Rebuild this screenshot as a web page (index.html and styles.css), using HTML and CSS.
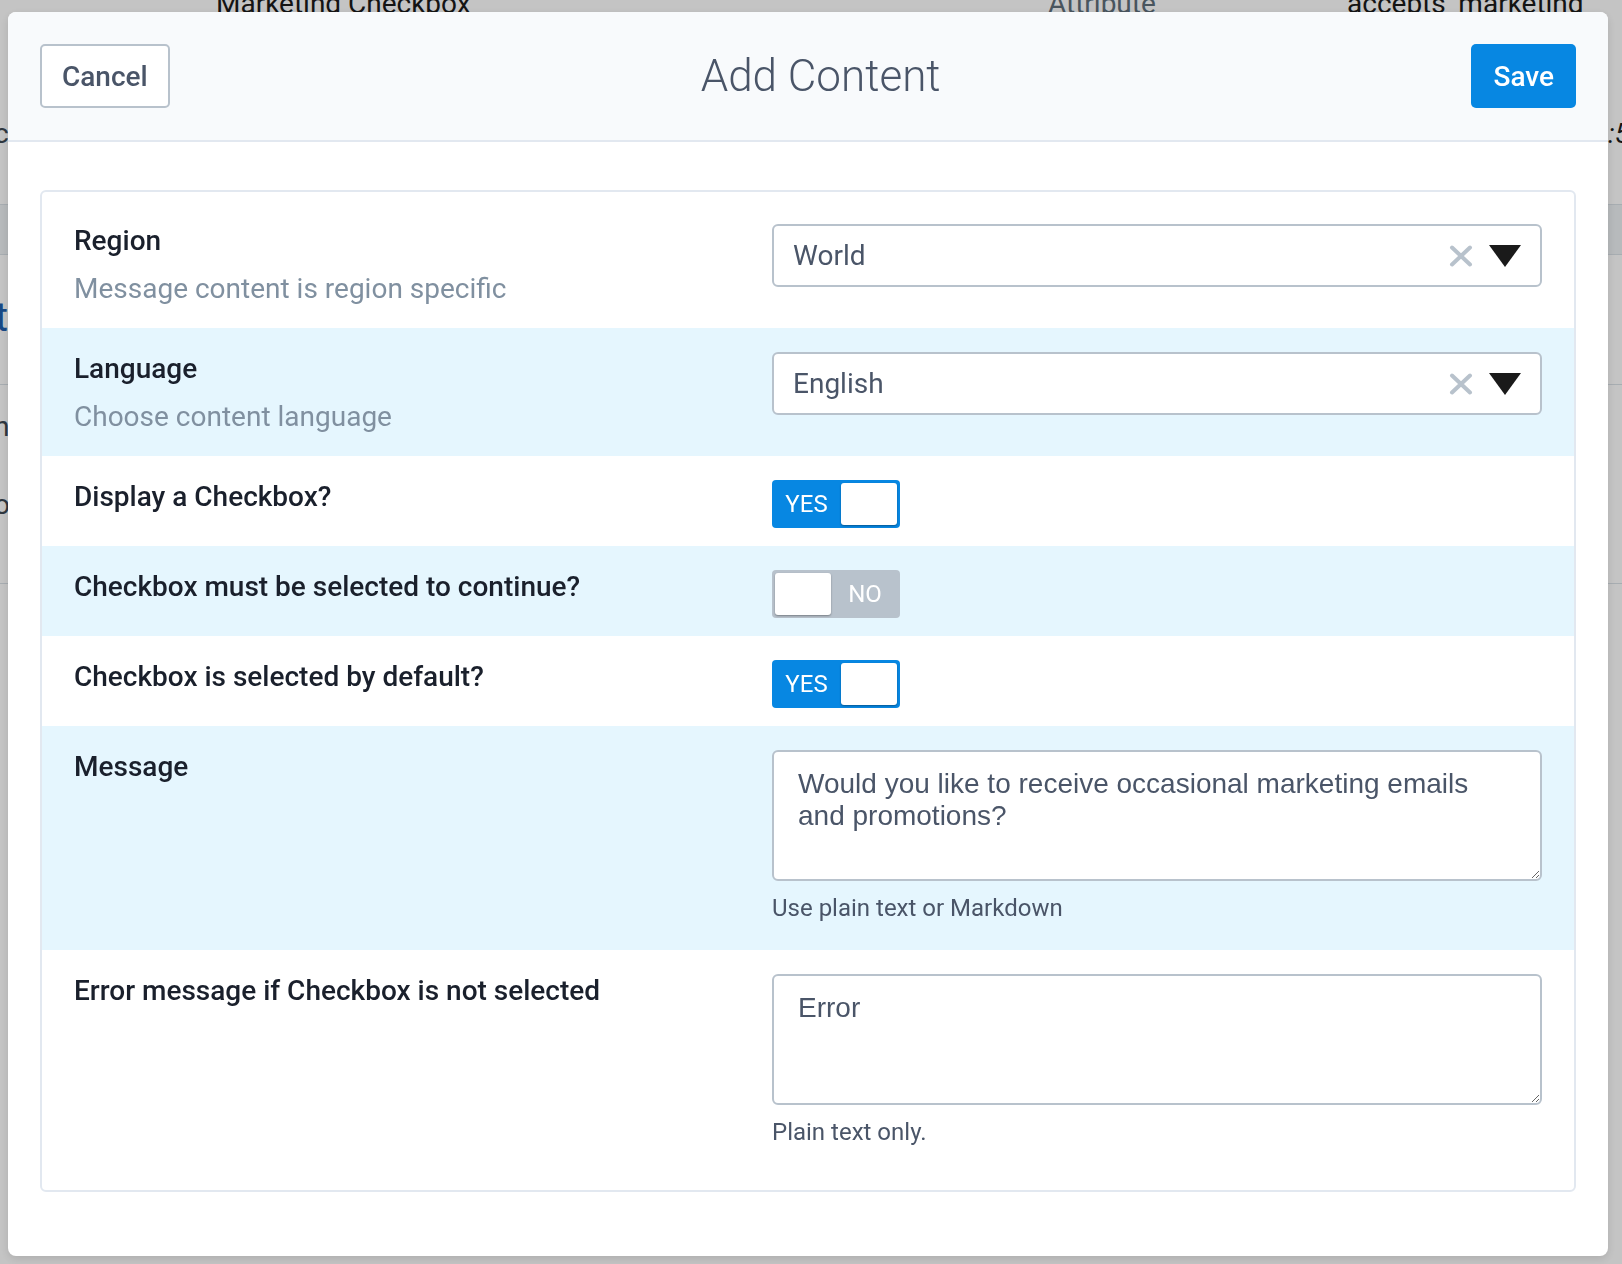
FILE: index.html
```html
<!DOCTYPE html>
<html lang="en">
<head>
<meta charset="utf-8">
<title>Add Content</title>
<link rel="stylesheet" href="styles.css">
</head>
<body>
<div class="bg">
  <div class="bg-top"><span>Marketing Checkbox</span><span class="muted">Attribute</span><span>accepts_marketing</span></div>
  <div class="bg-row r1"><span class="lt">c</span><span class="rt">:58</span></div>
  <div class="bg-band"></div>
  <div class="bg-row r2"><span class="lt link">t</span></div>
  <div class="bg-row r3"><span class="lt">n</span><span class="lt lower">o</span></div>
</div>

<div class="overlay">
  <div class="modal">
    <div class="modal-header">
      <button class="btn btn-cancel">Cancel</button>
      <h1 class="title">Add Content</h1>
      <button class="btn btn-save">Save</button>
    </div>
    <div class="modal-body">
      <div class="card">
        <div class="row">
          <div class="label-col">
            <div class="label">Region</div>
            <div class="hint">Message content is region specific</div>
          </div>
          <div class="field">
            <div class="select">
              <span class="value">World</span>
              <svg class="clear" viewBox="0 0 24 22"><path d="M3 2.5 L21 19.5 M21 2.5 L3 19.5" stroke="#b8c2cc" stroke-width="4" stroke-linecap="round" fill="none"/></svg>
              <svg class="caret" viewBox="0 0 32 22"><polygon points="0,0 32,0 16,22" fill="#1a1a1a"/></svg>
            </div>
          </div>
        </div>
        <div class="row alt">
          <div class="label-col">
            <div class="label">Language</div>
            <div class="hint">Choose content language</div>
          </div>
          <div class="field">
            <div class="select">
              <span class="value">English</span>
              <svg class="clear" viewBox="0 0 24 22"><path d="M3 2.5 L21 19.5 M21 2.5 L3 19.5" stroke="#b8c2cc" stroke-width="4" stroke-linecap="round" fill="none"/></svg>
              <svg class="caret" viewBox="0 0 32 22"><polygon points="0,0 32,0 16,22" fill="#1a1a1a"/></svg>
            </div>
          </div>
        </div>
        <div class="row">
          <div class="label-col"><div class="label">Display a Checkbox?</div></div>
          <div class="field">
            <div class="toggle on"><span class="txt">YES</span><span class="knob"></span></div>
          </div>
        </div>
        <div class="row alt">
          <div class="label-col"><div class="label">Checkbox must be selected to continue?</div></div>
          <div class="field">
            <div class="toggle off"><span class="knob"></span><span class="txt">NO</span></div>
          </div>
        </div>
        <div class="row">
          <div class="label-col"><div class="label">Checkbox is selected by default?</div></div>
          <div class="field">
            <div class="toggle on"><span class="txt">YES</span><span class="knob"></span></div>
          </div>
        </div>
        <div class="row alt">
          <div class="label-col"><div class="label">Message</div></div>
          <div class="field">
            <textarea class="textarea">Would you like to receive occasional marketing emails and promotions?</textarea>
            <div class="help">Use plain text or Markdown</div>
          </div>
        </div>
        <div class="row">
          <div class="label-col"><div class="label">Error message if Checkbox is not selected</div></div>
          <div class="field">
            <textarea class="textarea">Error</textarea>
            <div class="help">Plain text only.</div>
          </div>
        </div>
      </div>
    </div>
  </div>
</div>
</body>
</html>
```

FILE: styles.css
```css
* { box-sizing: border-box; }

html, body {
  margin: 0;
  height: 1264px;
  overflow: hidden;
}

body {
  background: #ffffff;
  font-family: Roboto, "Liberation Sans", sans-serif;
  color: #1a202c;
}

/* ---------- underlying page (dimmed by overlay) ---------- */
.bg {
  display: flex;
  flex-direction: column;
}

.bg-top {
  margin-top: -13px;
  display: grid;
  grid-template-columns: 216px 832px 299px auto;
  font-size: 28px;
  line-height: 34px;
  color: #1a1a1a;
}
.bg-top::before { content: ""; }
.bg-top .muted { color: #606f7b; }

.bg-row {
  display: flex;
  justify-content: space-between;
  align-items: flex-start;
  font-size: 28px;
  line-height: 34px;
  color: #3d4852;
}
.bg-row .lt { margin-left: -6px; }
.bg-row .rt { width: 14px; white-space: nowrap; color: #1a1a1a; font-style: italic; }

.r1 { height: 183px; padding-top: 96px; }
.bg-band {
  height: 51px;
  background: #eef2f5;
  border-top: 1px solid #dae1e7;
  border-bottom: 1px solid #dae1e7;
}
.r2 {
  height: 130px;
  padding-top: 39px;
  border-bottom: 1px solid #dae1e7;
}
.r2 .link { font-size: 40px; line-height: 48px; color: #1f5fae; margin-left: -5px; }
.r3 {
  height: 199px;
  flex-direction: column;
  justify-content: flex-start;
  padding-top: 25px;
  border-bottom: 1px solid #dae1e7;
}
.r3 .lower { margin-top: 44px; }

/* ---------- overlay & modal ---------- */
.overlay {
  position: fixed;
  inset: 0;
  background: rgba(0, 0, 0, 0.23);
  padding: 12px 14px 8px 8px;
  display: flex;
}

.modal {
  flex: 1;
  background: #ffffff;
  border-radius: 8px;
  display: flex;
  flex-direction: column;
  overflow: hidden;
  box-shadow: 0 3px 10px rgba(0, 0, 0, 0.12);
}

.modal-header {
  flex-shrink: 0;
  height: 130px;
  background: #f8fafc;
  border-bottom: 2px solid #e2e8f0;
  display: flex;
  align-items: center;
  padding: 0 32px;
}

.btn {
  height: 64px;
  font-family: Roboto, "Liberation Sans", sans-serif;
  font-size: 28px;
  font-weight: 500;
  border-radius: 5px;
  cursor: pointer;
}

.btn-cancel {
  background: #ffffff;
  border: 2px solid #b8c2cc;
  color: #4a5568;
  padding: 0 20px;
}

.btn-save {
  background: #0787e2;
  border: none;
  color: #ffffff;
  padding: 0 22px;
}

.title {
  flex: 1;
  margin: 0;
  text-align: center;
  font-size: 44px;
  font-weight: 300;
  color: #4a5568;
}

.modal-body {
  padding: 48px 32px 0;
}

.card {
  border: 2px solid #e2e8f0;
  border-radius: 6px;
  padding: 8px 0 16px;
}

.row {
  display: grid;
  grid-template-columns: 1fr 770px;
  padding: 24px 32px 18px;
}
.row.alt { background: #e5f6fe; }

.label {
  font-size: 28px;
  line-height: 34px;
  font-weight: 500;
  color: #1a202c;
}

.hint {
  margin-top: 10px;
  font-size: 28px;
  line-height: 42px;
  color: #8090a0;
}

.select {
  height: 63px;
  background: #ffffff;
  border: 2px solid #b8c2cc;
  border-radius: 6px;
  display: flex;
  align-items: center;
  padding: 0 19px 0 19px;
  font-size: 28px;
  color: #4a5568;
}
.select .value { flex: 1; }
.select .clear { width: 24px; height: 22px; margin-right: 16px; }
.select .caret { width: 32px; height: 22px; }

.toggle {
  width: 128px;
  height: 48px;
  border-radius: 4px;
  padding: 3px;
  display: flex;
  color: #ffffff;
  font-size: 24px;
}
.toggle.on { background: #0787e2; }
.toggle.off { background: #b8c2cc; }
.toggle .txt {
  flex: 1;
  display: flex;
  align-items: center;
  justify-content: center;
}
.toggle.on .txt { padding-right: 3px; }
.toggle.off .txt { padding-left: 2px; }
.toggle .knob {
  width: 56px;
  background: #ffffff;
  border-radius: 3px;
  box-shadow: 0 1px 2px rgba(0, 0, 0, 0.35);
}

.textarea {
  display: block;
  width: 100%;
  height: 131px;
  margin: 0;
  background: #ffffff;
  border: 2px solid #b8c2cc;
  border-radius: 6px;
  padding: 16px 26px 16px 24px;
  font-family: "Liberation Sans", Arial, sans-serif;
  font-size: 28px;
  line-height: normal;
  color: #4a5568;
  outline: none;
}

.help {
  margin: 9px 0 6px;
  font-size: 24px;
  line-height: 36px;
  color: #4a5568;
}
```
